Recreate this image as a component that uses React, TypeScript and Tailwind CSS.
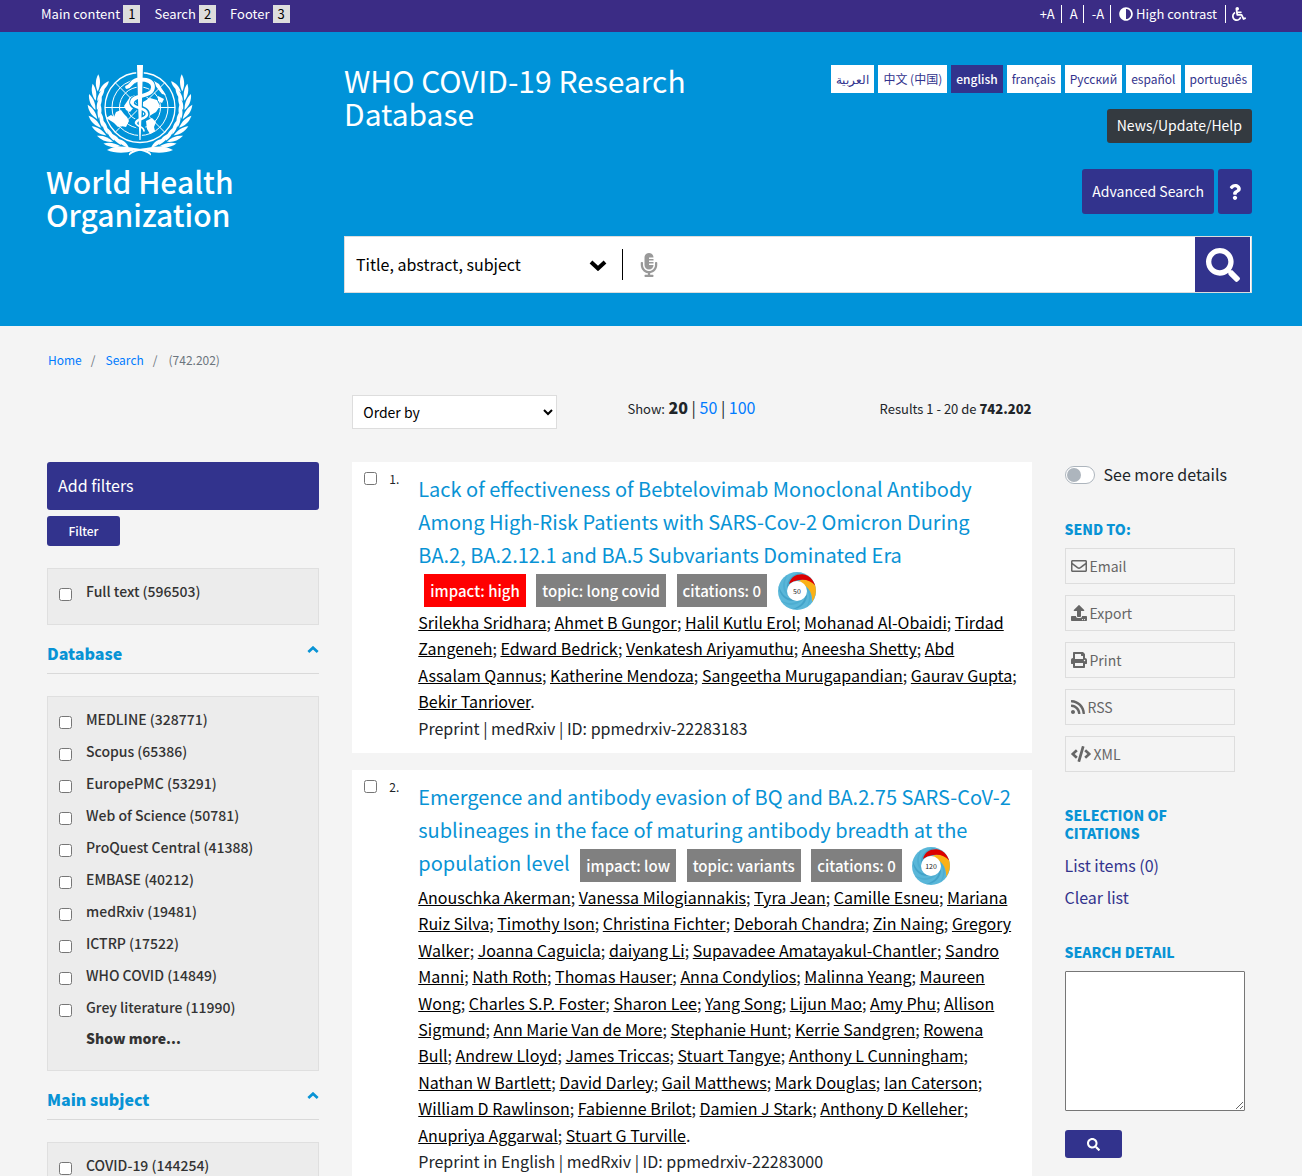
import { type ReactNode } from 'react';
import {
  FaAdjust,
  FaCode,
  FaMicrophoneAlt,
  FaPrint,
  FaQuestion,
  FaRegEnvelope,
  FaRss,
  FaSearch,
  FaUpload,
  FaWheelchair,
} from 'react-icons/fa';

const LANGUAGES = ['العربية', '中文 (中国)', 'english', 'français', 'Русский', 'español', 'português'];

const DATABASES = [
  'MEDLINE (328771)',
  'Scopus (65386)',
  'EuropePMC (53291)',
  'Web of Science (50781)',
  'ProQuest Central (41388)',
  'EMBASE (40212)',
  'medRxiv (19481)',
  'ICTRP (17522)',
  'WHO COVID (14849)',
  'Grey literature (11990)',
];

type Article = {
  n: number;
  title: string;
  impact: string;
  topic: string;
  score: number;
  authors: string[];
  source: string;
};

const ARTICLES: Article[] = [
  {
    n: 1,
    title:
      'Lack of effectiveness of Bebtelovimab Monoclonal Antibody Among High-Risk Patients with SARS-Cov-2 Omicron During BA.2, BA.2.12.1 and BA.5 Subvariants Dominated Era',
    impact: 'high',
    topic: 'long covid',
    score: 50,
    authors: [
      'Srilekha Sridhara', 'Ahmet B Gungor', 'Halil Kutlu Erol', 'Mohanad Al-Obaidi', 'Tirdad Zangeneh',
      'Edward Bedrick', 'Venkatesh Ariyamuthu', 'Aneesha Shetty', 'Abd Assalam Qannus', 'Katherine Mendoza',
      'Sangeetha Murugapandian', 'Gaurav Gupta', 'Bekir Tanriover',
    ],
    source: 'Preprint | medRxiv | ID: ppmedrxiv-22283183',
  },
  {
    n: 2,
    title:
      'Emergence and antibody evasion of BQ and BA.2.75 SARS-CoV-2 sublineages in the face of maturing antibody breadth at the population level',
    impact: 'low',
    topic: 'variants',
    score: 120,
    authors: [
      'Anouschka Akerman', 'Vanessa Milogiannakis', 'Tyra Jean', 'Camille Esneu', 'Mariana Ruiz Silva',
      'Timothy Ison', 'Christina Fichter', 'Deborah Chandra', 'Zin Naing', 'Gregory Walker', 'Joanna Caguicla',
      'daiyang Li', 'Supavadee Amatayakul-Chantler', 'Sandro Manni', 'Nath Roth', 'Thomas Hauser',
      'Anna Condylios', 'Malinna Yeang', 'Maureen Wong', 'Charles S.P. Foster', 'Sharon Lee', 'Yang Song',
      'Lijun Mao', 'Amy Phu', 'Allison Sigmund', 'Ann Marie Van de More', 'Stephanie Hunt', 'Kerrie Sandgren',
      'Rowena Bull', 'Andrew Lloyd', 'James Triccas', 'Stuart Tangye', 'Anthony L Cunningham',
      'Nathan W Bartlett', 'David Darley', 'Gail Matthews', 'Mark Douglas', 'Ian Caterson',
      'William D Rawlinson', 'Fabienne Brilot', 'Damien J Stark', 'Anthony D Kelleher', 'Anupriya Aggarwal',
      'Stuart G Turville',
    ],
    source: 'Preprint in English | medRxiv | ID: ppmedrxiv-22283000',
  },
];

function Laurel() {
  const turns = [24, 12, 0, -12, -24, -36, -48, -59, -70];
  return (
    <g>
      {turns.map((t) => (
        <g key={t} transform={`rotate(${t} 60 46)`}>
          <path d="M15.500 50C11 46 8.500 41 9 34C13.500 38 15.500 43 15.500 50Z" fill="white" />
          <path d="M17 50C16 44 18 39 21.500 36C22.500 41 21 46 17 50Z" fill="white" />
        </g>
      ))}
    </g>
  );
}

function Emblem() {
  return (
    <svg viewBox="0 0 120 100" className="block h-[100px] w-[120px]" aria-hidden="true">
      <g fill="none" stroke="white" strokeWidth="1">
        <circle cx="60" cy="47.500" r="35" strokeWidth="1.300" />
        <circle cx="60" cy="47.500" r="28" />
        <circle cx="60" cy="47.500" r="20.500" />
        <circle cx="60" cy="47.500" r="12.500" />
        <path d="M25 47.500H95M35.300 22.800L84.700 72.200M84.700 22.800L35.300 72.200" />
      </g>
      <g fill="white">
        <path d="M26 58L31 55L34 57L36 52L41 50L44 54L47 57L49 61L46 67L41 66L38 67L34 63L31 61Z" />
        <path d="M44 46L50 37L55 35L58 37L52 42L54 47L50 52L46 50Z" />
        <path d="M45 27L50 21L57 19L58 22L52 25L48 28Z" />
        <path d="M63 42L70 38L77 40L80 46L76 52L71 55L66 59L63 55Z" />
        <path d="M66 61L72 58L76 62L74 67L75 71L70 74L67 69Z" />
        <path d="M74 21L79 24L82 29L86 35L82 34L78 29L75 25Z" />
        <path d="M78 36L84 39L82 43L78 41Z" />
      </g>
      <path d="M57 5H63L61.700 50L60.800 80H59.200L58.300 50Z" fill="#0093d9" stroke="#0093d9" strokeWidth="2" />
      <path
        d="M47 27C52 26 51 19.500 60 19.500C68 19.500 73 22 73 27C73 38 52 34 52 42.500C52 49 67 47 67 54C67 60 56 58 56 63C56 67 64 66 64 71"
        fill="none"
        stroke="#0093d9"
        strokeWidth="5.500"
        strokeLinecap="round"
      />
      <path d="M57 5H63L61.700 50L60.600 80H59.400L58.300 50Z" fill="white" />
      <g fill="none" stroke="white" strokeLinecap="round">
        <path d="M47 27C52 26 51 19.500 60 19.500C68 19.500 73 22 73 27C73 38 52 34 52 42.500" strokeWidth="3.800" />
        <path d="M52 42.500C52 49 67 47 67 54C67 60 56 58 56 63" strokeWidth="2.600" />
        <path d="M56 63C56 67 64 66 64 71" strokeWidth="1.600" />
      </g>
      <Laurel />
      <g transform="matrix(-1 0 0 1 120 0)">
        <Laurel />
      </g>
      <g fill="white">
        <path d="M27 90C36 84 48 87 58 88.500C66 89.500 72 92 71 95.500C66 91 60 90 54 90.500C44 94 34 93 27 90Z" />
        <path d="M93 90C84 84 72 87 62 88.500C54 89.500 48 92 49 95.500C54 91 60 90 66 90.500C76 94 86 93 93 90Z" />
      </g>
    </svg>
  );
}

function Chevron({ className }: { className: string }) {
  return (
    <svg viewBox="0 0 18 12" className={className} aria-hidden="true">
      <path d="M2 3L9 9.500L16 3" fill="none" stroke="currentColor" strokeWidth="4" />
    </svg>
  );
}

const BLADES = [0, 45, 90, 135, 180, 225, 270, 315];

function Donut({ score }: { score: number }) {
  return (
    <a href="#altmetric" className="-mb-px ml-[6px] inline-block align-middle" aria-label={`Attention score ${score}`}>
      <svg viewBox="0 0 38 38" className="block size-[38px]">
        <circle cx="19" cy="19" r="19" fill="#5ab7d9" />
        {BLADES.map((a) => (
          <path
            key={a}
            d="M9 17C8 8 15 1 24 0.700C15 4 11 9 11.500 14Z"
            fill={a % 90 === 0 ? '#43a3c9' : '#4eaed2'}
            transform={`rotate(${a} 19 19)`}
          />
        ))}
        <path d="M20 10C25 5 33 7 37 13C39 19 37.500 25 34 30C35 21 30 13 20 10Z" fill="#fbb116" />
        <path d="M11 12C13 4 20 1.500 26 2.500C31 3.500 35 7 37.200 13.500C31 6.500 21 6 11 12Z" fill="#dc0000" />
        <circle cx="19" cy="19" r="10" fill="white" />
        <text x="19" y="21.500" textAnchor="middle" fontSize="7" fill="#222222">
          {score}
        </text>
      </svg>
    </a>
  );
}

function Badge({ red, children }: { red?: boolean; children: ReactNode }) {
  return (
    <span
      className={`ml-[6px] inline-block px-[6px] align-middle text-[15px] leading-[33px] font-medium text-white ${
        red ? 'bg-[#ff0000]' : 'bg-[#808080]'
      }`}
    >
      {children}
    </span>
  );
}

function ArticleCard({ a }: { a: Article }) {
  return (
    <article className="flex bg-white pt-[10px] pr-[14px] pb-3 pl-3">
      <label className="flex h-[13px] w-[54px] shrink-0 items-center gap-3 text-xs">
        <input type="checkbox" className="size-[13px]" />
        {a.n}.
      </label>
      <div className="min-w-0 flex-1 text-base leading-[1.65]">
        <h2 className="pr-[6px] text-xl leading-[33px]">
          <a href="#article" className="text-[#0893d5]">{a.title}</a>{' '}
          <Badge red={a.impact === 'high'}>impact: {a.impact}</Badge>{' '}
          <Badge>topic: {a.topic}</Badge> <Badge>citations: 0</Badge>{' '}
          <Donut score={a.score} />
        </h2>
        <p>
          {a.authors.map((name, i) => (
            <span key={name}>
              <a href="#author" className="text-black underline">{name}</a>
              {i < a.authors.length - 1 ? '; ' : '.'}
            </span>
          ))}
        </p>
        <p>{a.source}</p>
      </div>
    </article>
  );
}

function FilterBox({ items, more }: { items: string[]; more?: boolean }) {
  return (
    <div className="border border-[#dfdfdf] bg-[#ececec] pt-[6px] pb-[17px] pl-[11px] text-sm font-medium text-[#333333]">
      {items.map((t) => (
        <label key={t} className="flex h-8 items-center gap-[14px]">
          <input type="checkbox" className="mt-[7px] size-[13px]" />
          {t}
        </label>
      ))}
      {more && (
        <a href="#more" className="ml-[27px] flex h-[30px] items-center font-black">Show more...</a>
      )}
    </div>
  );
}

function FilterHeading({ children }: { children: ReactNode }) {
  return (
    <h3 className="mb-[22px] flex h-[49px] justify-between border-b border-[#d9d9d9] text-base font-black text-[#0893d5]">
      <span className="mt-4 leading-6">{children}</span>
      <button type="button" aria-label="Collapse" className="mt-[21px] h-2">
        <Chevron className="h-2 w-3 rotate-180" />
      </button>
    </h3>
  );
}

const SEND = [
  { icon: FaRegEnvelope, label: 'Email', size: 'h-4 w-4' },
  { icon: FaUpload, label: 'Export', size: 'h-4 w-4' },
  { icon: FaPrint, label: 'Print', size: 'h-4 w-4' },
  { icon: FaRss, label: 'RSS', size: 'h-4 w-[14px]' },
  { icon: FaCode, label: 'XML', size: 'h-4 w-5' },
];

export default function App() {
  return (
    <div className="min-h-screen bg-[#f4f4f4] font-['Noto_Sans_CJK_SC','Noto_Sans',sans-serif] text-[#212529]">
      <nav className="flex h-8 items-center justify-between bg-[#3b2c85] pr-14 pl-[41px] text-[13px] text-white">
        <div className="flex gap-[14px] pb-1 leading-[18px]">
          {['Main content', 'Search', 'Footer'].map((t, i) => (
            <a key={t} href="#skip" className="flex gap-[3px]">
              {t}
              <span className="bg-[#dddddd] px-[5px] text-center text-black">{i + 1}</span>
            </a>
          ))}
        </div>
        <div className="flex pb-1 leading-[18px]">
          <button type="button" className="border-r border-white pr-[6px]">+A</button>
          <button type="button" className="border-r border-white pr-[5px] pl-2">A</button>
          <button type="button" className="border-r border-white pr-[6px] pl-2">-A</button>
          <button type="button" className="flex items-center gap-[3px] border-r border-white px-2">
            <FaAdjust className="size-[14px]" />
            High contrast
          </button>
          <button type="button" aria-label="Accessibility" className="pl-[6px]">
            <FaWheelchair className="size-[14px]" />
          </button>
        </div>
      </nav>

      <header className="flex bg-[#0093d9] pr-[50px] pb-[33px] pl-[46px]">
        <a href="#who" className="w-[298px] shrink-0 pt-7 text-white" aria-label="World Health Organization">
          <div className="pl-[34px]">
            <Emblem />
          </div>
          <div className="mt-[5px] text-3xl leading-[33px] font-medium">
            World Health
            <br />
            Organization
          </div>
        </a>
        <div className="min-w-0 flex-1 pt-8 text-white">
          <div className="flex items-start justify-between">
            <h1 className="w-[400px] text-3xl leading-[33px]">WHO COVID-19 Research Database</h1>
            <div className="mt-px flex flex-col items-end">
              <div className="flex gap-1 text-xs leading-7">
                {LANGUAGES.map((l) => (
                  <a
                    key={l}
                    href="#lang"
                    className={
                      l === 'english'
                        ? 'bg-[#32338d] px-[5px] font-medium text-white'
                        : 'bg-white px-[5px] text-[#32338d]'
                    }
                  >
                    {l}
                  </a>
                ))}
              </div>
              <a href="#news" className="mt-4 rounded-[3px] bg-[#343a40] px-[10px] pb-[2px] text-sm leading-8">
                News/Update/Help
              </a>
              <div className="mt-[26px] flex gap-1 text-sm leading-[45px]">
                <a href="#advanced" className="rounded-[3px] bg-[#32338d] px-[10px]">Advanced Search</a>
                <a href="#help" aria-label="Help" className="flex w-[34px] items-center justify-center rounded-[3px] bg-[#32338d]">
                  <FaQuestion className="size-4" />
                </a>
              </div>
            </div>
          </div>
          <form className="mt-[22px] flex h-[57px] border border-[#dddddd] bg-white pr-px text-black">
            <div className="relative my-3 w-[278px] shrink-0 border-r border-black">
              <select aria-label="Search field" className="h-full w-full appearance-none pb-[2px] pl-[11px] text-base outline-none">
                <option>Title, abstract, subject</option>
              </select>
              <Chevron className="pointer-events-none absolute top-[10px] right-[15px] h-3 w-[18px]" />
            </div>
            <button type="button" aria-label="Voice search" className="pl-[14px] text-[#999999]">
              <FaMicrophoneAlt className="size-6" />
            </button>
            <input type="text" aria-label="Search" className="min-w-0 flex-1 px-3 outline-none" />
            <button type="submit" aria-label="Search" className="flex w-[55px] items-center justify-center bg-[#32338d] text-white">
              <FaSearch className="size-[34px]" />
            </button>
          </form>
        </div>
      </header>

      <div className="pr-[67px] pl-[47px]">
        <nav aria-label="Breadcrumb" className="flex gap-[9px] pt-6 pl-px text-xs leading-5 text-[#6c757d]">
          <a href="#home" className="text-[#007bff]">Home</a>
          <span className="pr-px">/</span>
          <a href="#search" className="text-[#007bff]">Search</a>
          <span className="pr-[2px]">/</span>
          <span>(742.202)</span>
        </nav>

        <div className="mt-[25px] grid grid-cols-12 gap-x-[33px]">
          <div className="col-span-7 col-start-4 flex h-[34px] justify-between">
            <select aria-label="Order" className="w-[205px] border border-[#dddddd] bg-white px-[6px] text-sm text-black">
              <option>Order by</option>
            </select>
            <div className="pr-[54px] text-base leading-6">
              <span className="text-[13px]">Show:</span> <b className="font-black">20</b> |{' '}
              <a href="#50" className="text-[#007bff]">50</a> |{' '}
              <a href="#100" className="text-[#007bff]">100</a>
            </div>
            <div className="text-[13px] leading-7">
              Results 1 - 20 de <b className="font-black">742.202</b>
            </div>
          </div>
        </div>

        <main className="mt-[33px] grid grid-cols-12 gap-x-[33px]">
          <aside className="col-span-3">
            <h2 className="rounded-[3px] bg-[#32338d] pb-[2px] pl-[11px] text-base leading-[46px] text-white">Add filters</h2>
            <button type="button" className="mt-[6px] mb-[22px] h-[30px] w-[73px] rounded-[3px] bg-[#32338d] pb-px text-xs font-medium text-white">
              Filter
            </button>
            <FilterBox items={['Full text (596503)']} />
            <FilterHeading>Database</FilterHeading>
            <FilterBox items={DATABASES} more />
            <FilterHeading>Main subject</FilterHeading>
            <FilterBox items={['COVID-19 (144254)']} />
          </aside>

          <section className="col-span-7 flex flex-col gap-[17px]">
            {ARTICLES.map((a) => (
              <ArticleCard key={a.n} a={a} />
            ))}
          </section>

          <aside className="col-span-2">
            <label className="flex items-center gap-[9px] text-base leading-[26px] whitespace-nowrap">
              <input type="checkbox" role="switch" className="peer sr-only" />
              <span className="flex h-[18px] w-[30px] items-center rounded-full border border-[#adb5bd] bg-white pl-px">
                <span className="size-[14px] rounded-full bg-[#adb5bd]" />
              </span>
              <span className="pb-[2px] leading-6">See more details</span>
            </label>
            <h3 className="mt-8 text-sm leading-[18px] font-black text-[#0893d5]">SEND TO:</h3>
            <div className="mt-[10px] flex flex-col gap-[11px]">
              {SEND.map(({ icon: Icon, label, size }) => (
                <a
                  key={label}
                  href="#send"
                  className="flex h-9 items-center gap-[3px] border border-[#dddddd] pl-[5px] text-sm text-[#666666]"
                >
                  <Icon className={size} />
                  {label}
                </a>
              ))}
            </div>
            <h3 className="mt-[34px] text-sm leading-[18px] font-black text-[#0893d5]">SELECTION OF CITATIONS</h3>
            <div className="mt-[7px] flex flex-col text-base leading-8 text-[#32338d]">
              <a href="#list">List items (0)</a>
              <a href="#clear">Clear list</a>
            </div>
            <h3 className="mt-[30px] text-sm leading-[18px] font-black text-[#0893d5]">SEARCH DETAIL</h3>
            <textarea
              aria-label="Search detail"
              className="mt-[10px] block h-[140px] w-[180px] rounded-[1px] border border-[#767676] bg-white"
            />
            <button
              type="button"
              aria-label="Run search"
              className="mt-[19px] flex h-7 w-[57px] items-center justify-center rounded-[3px] bg-[#32338d] text-white"
            >
              <FaSearch className="size-[13px]" />
            </button>
          </aside>
        </main>
      </div>
    </div>
  );
}
